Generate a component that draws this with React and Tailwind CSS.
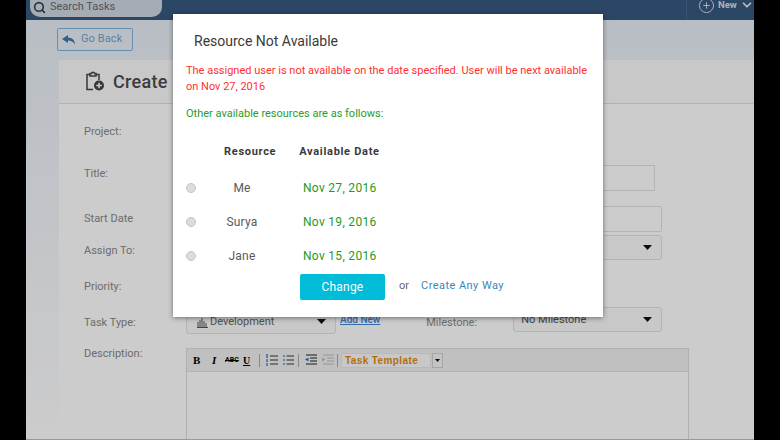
import React from "react";
import { Search, CirclePlus, ChevronDown } from "lucide-react";

function Caret({ small }) {
  return (
    <svg width={small ? 5 : 9} height={small ? 3 : 5} viewBox="0 0 9 5" className="shrink-0" preserveAspectRatio="none">
      <path d="M0 0H9L4.5 5Z" fill="#111" />
    </svg>
  );
}

function Row({ label, labelClass, height, children }) {
  return (
    <div className="flex" style={{ height }}>
      <div className={"w-[102px] shrink-0 text-[11px] leading-4 text-[#888] " + labelClass}>{label}</div>
      <div className="flex-1 flex min-w-0">{children}</div>
    </div>
  );
}

function Select({ className, children }) {
  return (
    <div className={"flex items-center pr-[9px] border border-[#e2e2e2] rounded-[3px] bg-[#fbfbfb] text-[11px] text-[#666] " + className}>
      {children}
      <span className="ml-auto">
        <Caret />
      </span>
    </div>
  );
}

function Radio() {
  return <span className="block w-[10px] h-[10px] rounded-full bg-[#dcdcdc] border border-[#c4c4c4] shrink-0" />;
}

function Resource({ name, date }) {
  return (
    <div className="flex items-center h-[34px]">
      <Radio />
      <div className="w-[92px] text-center text-[12px] text-[#5a5a5a] tracking-[0.2px]">{name}</div>
      <div className="ml-[15px] text-[12px] text-[#1f9a23] tracking-[0.3px]">{date}</div>
    </div>
  );
}

export default function App() {
  return (
    <div className="w-[780px] h-[440px] bg-black overflow-hidden font-['Roboto',sans-serif]">
      <div className="relative ml-[26px] w-[728px] h-[440px] overflow-hidden border-b border-[#999] bg-gradient-to-b from-[#e6edf5] to-[#ffffff] flex flex-col">
        {/* top bar */}
        <div className="h-[20px] shrink-0 bg-[#38587f] flex items-center justify-between">
          <div className="ml-[4px] w-[132px] h-[20px] -mt-[6px] rounded-b-[10px] bg-[#d0d8e0] flex items-center pl-[3px] pt-[1px] gap-[3px]">
            <Search size={13} strokeWidth={3} color="#2f3f50" />
            <span className="ml-[1px] text-[11px] text-[#5f6a75]">Search Tasks</span>
          </div>
          <div className="h-full w-[68px] border-l border-[#4a6a90] pl-[11px]">
            <div className="flex items-center h-full gap-[3px] -translate-y-[5px]">
              <CirclePlus size={17} strokeWidth={1.2} color="#ffffff" className="opacity-90" />
              <span className="text-[9.5px] font-bold text-[#d8dee6]">New</span>
              <ChevronDown size={14} strokeWidth={3} color="#e8ecf0" />
            </div>
          </div>
        </div>

        {/* go back */}
        <div className="h-[40px] shrink-0 pt-[8px] pl-[31px]">
          <div className="w-[76px] h-[23px] rounded-[2px] border border-[#7fb4e0] flex items-center pl-[4px] gap-[5px]">
            <svg width="14" height="10" viewBox="0 0 14 10">
              <path d="M6 0L0 4L6 8V5.5C9 5.5 11 6.5 13 9.5C13 5.5 10.5 2.7 6 2.5Z" fill="#3f78ac" />
            </svg>
            <span className="text-[11px] text-[#6fa3d0] tracking-[0.1px]">Go Back</span>
          </div>
        </div>

        {/* card */}
        <div className="ml-[33px] flex-1 bg-white flex flex-col min-h-0">
          <div className="h-[44px] shrink-0 bg-[#fbfbfb] border-b border-[#e0e0e0] flex items-center pl-[26px] gap-[8px]">
            <svg width="20" height="21" viewBox="0 0 20 21" fill="none" stroke="#444" strokeWidth="1.5">
              <path d="M8 18.5H2V3.5H5M11 3.5H14V9" />
              <path d="M5 5V2.5H6.5C6.5 0.8 9.5 0.8 9.5 2.5H11V5Z" />
              <circle cx="14" cy="14.5" r="5" fill="#444" stroke="none" />
              <path d="M14 11.7V17.3M11.2 14.5H16.8" stroke="#fbfbfb" strokeWidth="1.6" />
            </svg>
            <span className="text-[18px] font-medium text-[#4c4c4c] tracking-[0.3px]">Create</span>
          </div>

          <div className="pl-[25px] pt-[19px] flex flex-col">
            <Row label="Project:" labelClass="mt-[1px]" height={42} />
            <Row label="Title:" labelClass="mt-[1px]" height={41}>
              <div className="w-[469px] h-[26px] border border-[#e2e2e2] bg-white" />
            </Row>
            <Row label="Start Date" labelClass="mt-[5px]" height={29}>
              <div className="w-[476px] h-[26px] border border-[#e2e2e2] rounded-[2px] bg-white" />
            </Row>
            <Row label="Assign To:" labelClass="mt-[8px]" height={43}>
              <Select className="w-[476px] h-[25px]" />
            </Row>
            <Row label="Priority:" labelClass="mt-[1px]" height={29} />
            <Row label="Task Type:" labelClass="mt-[8px]" height={38}>
              <Select className="w-[150px] h-[26px] mt-[1px] pl-[10px]">
                <span className="flex items-center gap-[2px] translate-y-[1px]">
                  <svg width="11" height="11" viewBox="0 0 11 11" fill="none" stroke="#555" strokeWidth="1">
                    <path d="M1 10.5V5M3 10.5V3M5 10.5V1M7 10.5V4M9 10.5V6M0 10.5H11" />
                  </svg>
                  Development
                </span>
              </Select>
              <span className="ml-[4px] mt-[6px] h-[14px] text-[10px] leading-[14px] font-medium text-[#3f86d8] underline">Add New</span>
              <span className="ml-[46px] mt-[8px] w-[87px] h-4 text-[11px] leading-4 text-[#888]">Milestone:</span>
              <Select className="w-[149px] h-[25px] pl-[7px]">
                <span className="text-[#555] translate-y-[1px]">No Milestone</span>
              </Select>
            </Row>
            <Row label="Description:" labelClass="mt-[1px]" height={95}>
              <div className="mt-[3px] w-[503px] h-[92px] border border-[#dcdcdc] bg-white flex flex-col">
                <div className="h-[23px] shrink-0 bg-[#f0f0f0] border-b border-[#e2e2e2] flex items-center pl-[6px] text-black">
                  <span className="font-['Liberation_Serif',serif] font-bold text-[11px] w-[19px]">B</span>
                  <span className="font-['Liberation_Serif',serif] font-bold italic text-[11px] w-[13px]">I</span>
                  <span className="text-[7px] font-bold line-through w-[18px]">ABC</span>
                  <span className="font-['Liberation_Serif',serif] font-bold underline text-[10px] w-[16px]">U</span>
                  <span className="w-px h-[13px] bg-[#aaa] mr-[6px]" />
                  <svg width="12" height="12" viewBox="0 0 12 12" className="mr-[5px]" fill="none">
                    <path d="M4 2H12M4 6H12M4 10H12" stroke="#333" />
                    <path d="M1 0V4M1 5V8M1 9V12" stroke="#3f78d0" strokeWidth="1.4" />
                  </svg>
                  <svg width="11" height="12" viewBox="0 0 11 12" className="mr-[4px]" fill="none">
                    <path d="M3.5 2H11M3.5 6H11M3.5 10H11" stroke="#333" />
                    <path d="M1 1.2V2.8M1 5.2V6.8M1 9.2V10.8" stroke="#3f78d0" strokeWidth="1.6" />
                  </svg>
                  <span className="w-px h-[13px] bg-[#aaa] mr-[6px]" />
                  <svg width="12" height="12" viewBox="0 0 12 12" className="mr-[5px]" fill="none">
                    <path d="M1 1H12M5 4H12M5 7H12M1 10H12" stroke="#222" />
                    <path d="M0 5.5L3.5 3.5V7.5Z" fill="#2f6fc0" />
                  </svg>
                  <svg width="12" height="12" viewBox="0 0 12 12" className="mr-[3px]" fill="none">
                    <path d="M1 1H12M5 4H12M5 7H12M1 10H12" stroke="#bbb" />
                    <path d="M3.5 5.5L0 3.5V7.5Z" fill="#bbb" />
                  </svg>
                  <span className="w-px h-[13px] bg-[#aaa] mr-[3px]" />
                  <div className="w-[90px] h-[15px] bg-[#fafafa] border border-[#e8e8e8] flex items-center pl-[3px] font-['Liberation_Sans',sans-serif] font-bold text-[10px] tracking-[0.4px] text-[#e08a0e]">Task Template</div>
                  <div className="ml-[1px] w-[11px] h-[15px] bg-[#f4f4f4] border border-[#d0d0d0] flex items-center justify-center">
                    <Caret small />
                  </div>
                </div>
              </div>
            </Row>
          </div>
        </div>

        {/* dim layer */}
        <div className="absolute inset-0 bg-black/20" />

        {/* modal */}
        <div className="absolute left-[147px] top-[14px] w-[430px] h-[303px] bg-white shadow-[0_1px_5px_rgba(0,0,0,0.45)] pl-[13px] pr-[13px] pt-[17px]">
          <div className="ml-[8px] h-5 text-[14px] leading-5 text-[#3a3a3a]">Resource Not Available</div>
          <p className="mt-[12px] text-[11px] leading-[16px] text-[#ff3030]">
            The assigned user is not available on the date specified. User will be next available on Nov 27, 2016
          </p>
          <p className="mt-[11px] text-[11px] leading-[16px] text-[#2a9a2e]">Other available resources are as follows:</p>
          <div className="mt-[22px] h-4 flex text-[11px] leading-4 font-bold text-[#3a3a3a] tracking-[0.7px]">
            <span className="ml-[38px]">Resource</span>
            <span className="ml-[23px]">Available Date</span>
          </div>
          <div className="mt-[11px]">
            <Resource name="Me" date="Nov 27, 2016" />
            <Resource name="Surya" date="Nov 19, 2016" />
            <Resource name="Jane" date="Nov 15, 2016" />
          </div>
          <div className="mt-[1px] flex items-center pl-[114px]">
            <div className="w-[85px] h-[26px] rounded-[2px] bg-[#00bcd9] text-white text-[12px] tracking-[0.2px] flex items-center justify-center">Change</div>
            <span className="ml-[14px] text-[11px] text-[#666] -translate-y-[1px]">or</span>
            <span className="ml-[12px] text-[11px] text-[#3a87b8] tracking-[0.45px] -translate-y-[1px]">Create Any Way</span>
          </div>
        </div>
      </div>
    </div>
  );
}
